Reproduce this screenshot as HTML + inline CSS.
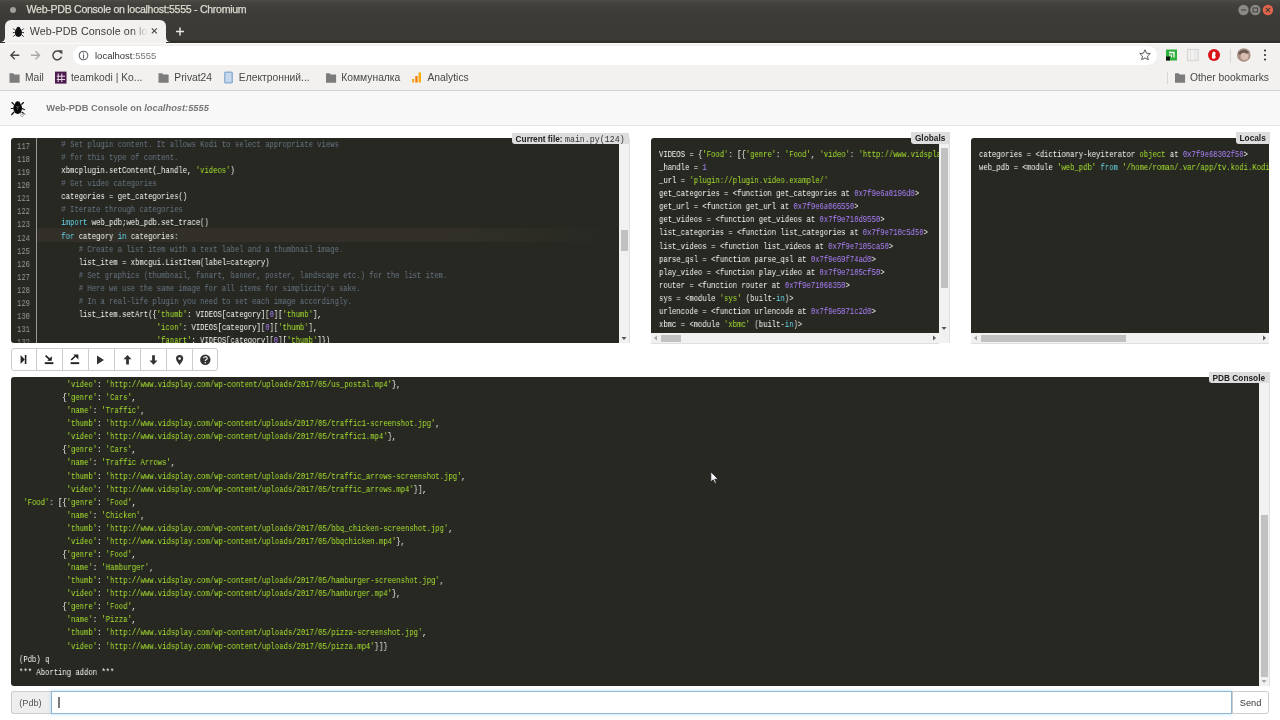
<!DOCTYPE html>
<html><head><meta charset="utf-8">
<style>
*{box-sizing:border-box;margin:0;padding:0}
html,body{width:1280px;height:720px;overflow:hidden;background:#fff;font-family:"Liberation Sans",sans-serif;position:relative}
.abs{position:absolute}
svg{position:absolute;overflow:visible}
#chrome{left:0;top:0;width:1280px;height:42.5px;background:linear-gradient(#4d4c47 0,#46453f 2px,#403f3b 7px,#3c3b37 16px,#3b3a36 40px,#2f2e2b 41.5px,#2f2e2b 42.5px)}
#wtitle{left:26.6px;top:2.6px;font-size:10.6px;letter-spacing:-0.3px;line-height:13px;color:#dfdbd2;white-space:nowrap;-webkit-text-stroke:0.25px #dfdbd2}
#tab{left:5px;top:20px;width:161px;height:23px;background:#f2f1f0;border-radius:6px 6px 0 0}
#tabtitle{left:29.8px;top:24.2px;width:118px;height:14px;overflow:hidden;font-size:10.7px;letter-spacing:0.1px;line-height:14px;color:#3c3c3c;white-space:nowrap;
  -webkit-mask-image:linear-gradient(to right,#000 86%,transparent 100%)}
#toolbar{left:0;top:42.5px;width:1280px;height:48px;background:#f2f1f0;border-bottom:1px solid #d3d2d0;box-shadow:inset 0 1px 0 #fbfbfa}
#omni{left:72.5px;top:45.6px;width:1084px;height:19.3px;background:#fff;border-radius:9.6px}
#url{left:95px;top:49px;font-size:9.5px;line-height:13px;color:#333;white-space:nowrap}
.bm{top:71px;font-size:10.3px;line-height:13px;color:#484848;white-space:nowrap}
#hdr{left:0;top:90.5px;width:1280px;height:35.5px;background:#f8f8f8;border-bottom:1px solid #e7e7e7}
#hdrtext{left:46.3px;top:102px;font-size:9.3px;font-weight:bold;color:#777;white-space:nowrap;line-height:12px}
.dark{background:#272822;color:#f8f8f2}
.mono{font-family:"Liberation Mono",monospace;font-size:8.68px;line-height:13.08px;white-space:pre;transform:scaleX(0.8333);transform-origin:0 0;will-change:transform}
.c{color:#687684}.s{color:#a6e22e}.k{color:#66d9ef}.n{color:#ae81ff}.o{color:#f8f8f2}.ln{color:#999}
.hl{background:linear-gradient(to right,rgba(153,122,102,.09) 70%,rgba(153,122,102,0))}
.lbl{background:#ddd;color:#222;font-weight:bold;font-size:8.3px;line-height:13px;overflow:hidden;border-radius:0 0 0 3px;white-space:nowrap;padding-left:4px}
.sb{background:#f1f1f1}
.sbv{box-shadow:inset -1px 0 0 #e0e0e0}.sbh{box-shadow:inset 0 -1px 0 #e0e0e0}
.thumb{background:#c1c1c1}
.btn{top:348.5px;width:26px;height:22.5px;border:1px solid #ccc;background:#fff}
#root{position:absolute;left:0;top:0;width:1280px;height:720px;will-change:transform}
</style></head><body><div id="root">
<!-- browser chrome -->
<div id="chrome" class="abs"></div>
<svg style="left:0;top:0" width="30" height="20"><circle cx="13" cy="10" r="3" fill="#a09f9a"/></svg>
<div id="wtitle" class="abs">Web-PDB Console on localhost:5555 - Chromium</div>
<svg style="left:1230px;top:0" width="50" height="20">
 <circle cx="13.5" cy="10" r="5.2" fill="#8a8985"/><rect x="11" y="9.5" width="5" height="1" fill="#3c3b37"/>
 <circle cx="25.3" cy="10" r="5.2" fill="#8a8985"/><rect x="23" y="8" width="4.6" height="4" fill="none" stroke="#3c3b37" stroke-width="0.9"/>
 <circle cx="37.9" cy="10" r="5.2" fill="#e5654a"/><path d="M35.8 7.9l4.2 4.2M40 7.9l-4.2 4.2" stroke="#3c3b37" stroke-width="1.1"/>
</svg>
<div id="tab" class="abs"></div>
<svg style="left:0;top:36px" width="172" height="8"><path d="M0 6 Q5 6 5 1 L5 6 Z" fill="#f2f1f0"/><path d="M171 6 Q166 6 166 1 L166 6 Z" fill="#f2f1f0"/></svg>
<svg style="left:12px;top:25px" width="14" height="14" viewBox="0 0 24 24">
 <ellipse cx="11" cy="13" rx="6" ry="7.5" fill="#111"/><circle cx="11" cy="6" r="3.2" fill="#111"/>
 <path d="M5 9L2 6M17 9L20 6M4.5 13H1.5M17.5 13H20.5M5 17L2 20M17 17L20 20" stroke="#111" stroke-width="1.6"/>
</svg>
<div id="tabtitle" class="abs">Web-PDB Console on localhost:5555</div>
<svg style="left:150px;top:26px" width="12" height="12"><path d="M1.8 2.3l5 5M6.8 2.3l-5 5" stroke="#444" stroke-width="1.1"/></svg>
<svg style="left:174px;top:25px" width="14" height="14"><path d="M6 2.4v8M2 6.4h8" stroke="#e8e6e3" stroke-width="1.5"/></svg>

<div id="toolbar" class="abs"></div>
<svg style="left:0;top:42px" width="70" height="26">
 <path d="M19.3 13.2H11.5M14.8 9.2l-4 4 4 4" fill="none" stroke="#4a4a4a" stroke-width="1.4"/>
 <path d="M31 13.2h7.8M35.5 9.2l4 4-4 4" fill="none" stroke="#a8a8a8" stroke-width="1.4"/>
 <path d="M61.2 11.2A4.4 4.4 0 1 0 61.5 14.8" fill="none" stroke="#4a4a4a" stroke-width="1.5"/>
 <path d="M58.2 8.3h4.2v4.2z" fill="#4a4a4a"/>
</svg>
<div id="omni" class="abs"></div>
<svg style="left:78px;top:50px" width="12" height="12"><circle cx="5.5" cy="5.5" r="4.3" fill="none" stroke="#5f6368" stroke-width="1.1"/><path d="M5.5 4.6v3.8M5.5 2.6v1" stroke="#5f6368" stroke-width="1.1"/></svg>
<div id="url" class="abs">localhost<span style="color:#777">:5555</span></div>
<svg style="left:1139px;top:49px" width="12" height="12"><path d="M6 0.8l1.55 3.4 3.7 0.4-2.75 2.5 0.8 3.65L6 8.9l-3.3 1.85 0.8-3.65L0.75 4.6l3.7-0.4z" fill="none" stroke="#5a5a5a" stroke-width="1"/></svg>
<svg style="left:1164px;top:48px" width="16" height="14">
 <rect x="2" y="1.5" width="11" height="11" fill="#2eb03c"/>
 <path d="M5 4.5h5v5" fill="none" stroke="#fff" stroke-width="1.3"/><path d="M5 7h2.5v2.5" fill="none" stroke="#fff" stroke-width="1.1"/>
 <rect x="2" y="8.5" width="4" height="4" fill="#111"/>
</svg>
<svg style="left:1186px;top:48px" width="14" height="14"><rect x="1.5" y="1.5" width="10.5" height="11" fill="none" stroke="#d6d6d6" stroke-width="1.2"/><path d="M4.5 1.5v11M9 1.5v11" stroke="#e0e0e0" stroke-width="1"/></svg>
<svg style="left:1207px;top:48px" width="14" height="14"><circle cx="7" cy="7" r="6" fill="#d7141a"/><path d="M5 10.5V6.5l0.8-2.8h2.2l0.6 1.5-0.4 2.4 0.6 1.7L7.8 10.8z" fill="#fff"/></svg>
<div class="abs" style="left:1229.5px;top:49px;width:1px;height:14px;background:#d9d7d4"></div>
<svg style="left:1236px;top:48px" width="16" height="16"><circle cx="7.8" cy="7" r="6.8" fill="#a88e84"/><circle cx="8.5" cy="8" r="4" fill="#d9bdb0"/><path d="M2 5 Q7 -1 13 4 L11 6 Q7 3 4 7z" fill="#6c5a50"/></svg>
<svg style="left:1262px;top:48px" width="6" height="14"><circle cx="3" cy="2.5" r="1.1" fill="#333"/><circle cx="3" cy="7" r="1.1" fill="#333"/><circle cx="3" cy="11.5" r="1.1" fill="#333"/></svg>

<!-- bookmarks -->
<svg style="left:0;top:70px" width="500" height="16">
 <path d="M9.5 3.2h3.6l1.2 1.3h5.3v8.2H9.5z" fill="#7c7c7c"/>
 <rect x="55" y="1.6" width="11.5" height="12" fill="#4b1b4e"/><path d="M58.2 3.5v8.5M61.8 3.5v8.5M56.8 6.2h8.2M56.8 9.5h8.2" stroke="#e9dce9" stroke-width="1"/>
 <path d="M158.5 3.2h3.6l1.2 1.3h5.3v8.2h-10.1z" fill="#7c7c7c"/>
 <rect x="224" y="1.5" width="9" height="12" rx="1.5" fill="#8fb2d6"/><rect x="225.5" y="3" width="6" height="9" fill="#c7d9ec"/>
 <path d="M326 3.2h3.6l1.2 1.3h5.3v8.2H326z" fill="#7c7c7c"/>
 <rect x="412" y="9" width="2.2" height="3.5" fill="#f5a623"/><rect x="415.3" y="6" width="2.3" height="6.5" fill="#f57c00"/><rect x="418.6" y="2.5" width="2.4" height="10" fill="#f9ab00"/>
</svg>
<div class="abs bm" style="left:25px">Mail</div>
<div class="abs bm" style="left:71px">teamkodi | Ko...</div>
<div class="abs bm" style="left:174.3px">Privat24</div>
<div class="abs bm" style="left:238.8px">Електронний...</div>
<div class="abs bm" style="left:341.3px">Коммуналка</div>
<div class="abs bm" style="left:427.5px">Analytics</div>
<div class="abs" style="left:1167px;top:72px;width:1px;height:12px;background:#d9d7d4"></div>
<svg style="left:1170px;top:70px" width="20" height="16"><path d="M5 3.2h3.6l1.2 1.3h5.3v8.2H5z" fill="#7c7c7c"/></svg>
<div class="abs bm" style="left:1190px">Other bookmarks</div>

<!-- page header -->
<div id="hdr" class="abs"></div>
<svg style="left:9px;top:99px" width="20" height="20" viewBox="0 0 20 20">
 <ellipse cx="8.7" cy="9.3" rx="4.4" ry="5.6" fill="#0a0a0a"/><ellipse cx="8.7" cy="4.3" rx="2.4" ry="2" fill="#0a0a0a"/>
 <path d="M5 5.5L2.6 3.2M12.4 5.5L14.8 3.2M4.5 9.5H1.8M13 9.5L15.8 10.8M5 13L2.4 16M12.6 13L15.5 15" stroke="#111" stroke-width="1.2"/>
 <path d="M7 7.6h3.4M8.7 7.6v3.4" stroke="#555" stroke-width="0.9"/>
 <path d="M11 14l2 2 2-2 2 2M11 16l2 2 2-2" stroke="#888" stroke-width="0.6" fill="none"/>
</svg>
<div id="hdrtext" class="abs">Web-PDB Console on <i>localhost:5555</i></div>

<!-- editor -->
<div class="abs dark" style="left:11px;top:138px;width:608px;height:205px;overflow:hidden;border-radius:3px 0 0 3px">
  <div class="abs hl" style="left:26px;top:90.2px;width:582px;height:13.8px"></div>
  <div class="abs" style="left:25px;top:0;width:1px;height:205px;background:#999"></div>
  <div class="abs mono ln" style="left:0;top:3.3px;width:22.8px;text-align:right">117
118
119
120
121
122
123
124
125
126
127
128
129
130
131
132</div>
  <div class="abs mono" style="left:32.5px;top:1.4px">    <span class="c"># Set plugin content. It allows Kodi to select appropriate views</span>
    <span class="c"># for this type of content.</span>
    xbmcplugin.setContent(_handle, <span class="s">'videos'</span>)
    <span class="c"># Get video categories</span>
    categories <span class="o">=</span> get_categories()
    <span class="c"># Iterate through categories</span>
    <span class="k">import</span> web_pdb;web_pdb.set_trace()
    <span class="k">for</span> category <span class="k">in</span> categories:
        <span class="c"># Create a list item with a text label and a thumbnail image.</span>
        list_item <span class="o">=</span> xbmcgui.ListItem(label<span class="o">=</span>category)
        <span class="c"># Set graphics (thumbnail, fanart, banner, poster, landscape etc.) for the list item.</span>
        <span class="c"># Here we use the same image for all items for simplicity's sake.</span>
        <span class="c"># In a real-life plugin you need to set each image accordingly.</span>
        list_item.setArt({<span class="s">'thumb'</span>: VIDEOS[category][<span class="n">0</span>][<span class="s">'thumb'</span>],
                          <span class="s">'icon'</span>: VIDEOS[category][<span class="n">0</span>][<span class="s">'thumb'</span>],
                          <span class="s">'fanart'</span>: VIDEOS[category][<span class="n">0</span>][<span class="s">'thumb'</span>]})</div>
</div>
<div class="abs sb sbv" style="left:619px;top:138px;width:10.5px;height:205px"></div>
<div class="abs thumb" style="left:620.5px;top:230px;width:7px;height:21px"></div>
<svg style="left:619px;top:333px" width="10" height="10"><path d="M2.5 4h5L5 7z" fill="#555"/></svg>
<div class="abs lbl" style="left:511.6px;top:132.6px;width:117.8px;height:11.6px">Current file: <span style="font-family:'Liberation Mono',monospace;font-weight:normal;font-size:8.3px;color:#333">main.py(124)</span></div>

<!-- globals -->
<div class="abs dark" style="left:651px;top:138px;width:288px;height:195px;overflow:hidden;border-radius:3px 0 0 0">
  <div class="abs mono" style="left:7.6px;top:10.6px">VIDEOS <span class="o">=</span> {<span class="s">'Food'</span>: [{<span class="s">'genre'</span>: <span class="s">'Food'</span>, <span class="s">'video'</span>: <span class="s">'http://www.vidsplay.com/wp-content/uploads/2017/05/bbqchicken.mp4'</span>}]}
_handle <span class="o">=</span> <span class="n">1</span>
_url <span class="o">=</span> <span class="s">'plugin://plugin.video.example/'</span>
get_categories <span class="o">=</span> &lt;function get_categories at <span class="n">0x7f9e6a0196d0</span>&gt;
get_url <span class="o">=</span> &lt;function get_url at <span class="n">0x7f9e6a066550</span>&gt;
get_videos <span class="o">=</span> &lt;function get_videos at <span class="n">0x7f9e710d9550</span>&gt;
list_categories <span class="o">=</span> &lt;function list_categories at <span class="n">0x7f9e710c5d50</span>&gt;
list_videos <span class="o">=</span> &lt;function list_videos at <span class="n">0x7f9e7105ca50</span>&gt;
parse_qsl <span class="o">=</span> &lt;function parse_qsl at <span class="n">0x7f9e69f74ad0</span>&gt;
play_video <span class="o">=</span> &lt;function play_video at <span class="n">0x7f9e7105cf50</span>&gt;
router <span class="o">=</span> &lt;function router at <span class="n">0x7f9e71068350</span>&gt;
sys <span class="o">=</span> &lt;module <span class="s">'sys'</span> (built<span class="o">-</span><span class="k">in</span>)&gt;
urlencode <span class="o">=</span> &lt;function urlencode at <span class="n">0x7f9e5871c2d0</span>&gt;
xbmc <span class="o">=</span> &lt;module <span class="s">'xbmc'</span> (built<span class="o">-</span><span class="k">in</span>)&gt;</div>
</div>
<div class="abs sb sbv" style="left:939px;top:138px;width:10.5px;height:205px"></div>
<div class="abs thumb" style="left:940.5px;top:148px;width:7px;height:140px"></div>
<svg style="left:939px;top:323px" width="10" height="10"><path d="M2.5 4h5L5 7z" fill="#555"/></svg>
<div class="abs sb sbh" style="left:651px;top:333px;width:288px;height:10.5px"></div>
<div class="abs thumb" style="left:661px;top:334.5px;width:20px;height:7px"></div>
<svg style="left:651px;top:333px" width="288" height="10"><path d="M6 2.5v5L3 5z" fill="#a3a3a3"/><path d="M282 2.5v5L285 5z" fill="#555"/></svg>
<div class="abs lbl" style="left:910.9px;top:132.3px;width:38.7px;height:11.6px">Globals</div>

<!-- locals -->
<div class="abs dark" style="left:971px;top:138px;width:298px;height:195px;overflow:hidden;border-radius:3px 3px 0 0">
  <div class="abs mono" style="left:7.6px;top:10.6px">categories <span class="o">=</span> &lt;dictionary<span class="o">-</span>keyiterator <span class="s">object</span> at <span class="n">0x7f9e68302f50</span>&gt;
web_pdb <span class="o">=</span> &lt;module <span class="s">'web_pdb'</span> <span class="k">from</span> <span class="s">'/home/roman/.var/app/tv.kodi.Kodi/data/addons/plugin.video.example/web_pdb/__init__.pyc'</span>&gt;</div>
</div>
<div class="abs sb sbh" style="left:971px;top:333px;width:298px;height:10.5px"></div>
<div class="abs thumb" style="left:981px;top:334.5px;width:145px;height:7px"></div>
<svg style="left:971px;top:333px" width="298" height="10"><path d="M6 2.5v5L3 5z" fill="#a3a3a3"/><path d="M292 2.5v5L295 5z" fill="#555"/></svg>
<div class="abs lbl" style="left:1235.5px;top:132.3px;width:34.2px;height:11.6px">Locals</div>

<!-- buttons -->
<div class="abs" style="left:10.6px;top:348px;width:207.4px;height:23.4px;border:1px solid #ccc;border-radius:3px;background:#fff"></div>
<div class="abs" style="left:36px;top:348.5px;width:1px;height:22.4px;background:#ccc"></div>
<div class="abs" style="left:62px;top:348.5px;width:1px;height:22.4px;background:#ccc"></div>
<div class="abs" style="left:88px;top:348.5px;width:1px;height:22.4px;background:#ccc"></div>
<div class="abs" style="left:114px;top:348.5px;width:1px;height:22.4px;background:#ccc"></div>
<div class="abs" style="left:140px;top:348.5px;width:1px;height:22.4px;background:#ccc"></div>
<div class="abs" style="left:166px;top:348.5px;width:1px;height:22.4px;background:#ccc"></div>
<div class="abs" style="left:192px;top:348.5px;width:1px;height:22.4px;background:#ccc"></div>
<svg style="left:0;top:348px" width="220" height="24">
 <!-- step over -->
 <path d="M20.6 7v9l4.2-4.5z" fill="#222"/><rect x="24.8" y="7" width="1.6" height="9" fill="#222"/>
 <!-- step into -->
 <path d="M45.6 7.6l4.6 4.2" stroke="#222" stroke-width="1.7" fill="none"/><path d="M47.2 12.8h4.6v-4.6z" fill="#222"/><rect x="44.8" y="14.2" width="8.6" height="1.9" fill="#222"/>
 <!-- step out -->
 <path d="M71.2 12l4.2-4" stroke="#222" stroke-width="1.7" fill="none"/><path d="M73.4 6.6h5v5z" fill="#222"/><rect x="70.6" y="14.2" width="8.6" height="1.9" fill="#222"/>
 <!-- continue -->
 <path d="M97 7.5v9l7-4.5z" fill="#333"/>
 <!-- up -->
 <path d="M127.5 7l-4 4.2h2.6v5.3h2.8v-5.3h2.6z" fill="#333"/>
 <!-- down -->
 <path d="M153.5 16.8l-4-4.2h2.6V7.3h2.8v5.3h2.6z" fill="#333"/>
 <!-- marker -->
 <path d="M179.6 17.2c-1.2-1.8-3.6-4.4-3.6-6.6a3.6 3.6 0 0 1 7.2 0c0 2.2-2.4 4.8-3.6 6.6z" fill="#333"/><circle cx="179.6" cy="10.6" r="1.3" fill="#fff"/>
 <!-- help -->
 <circle cx="205.3" cy="11.8" r="5.2" fill="#333"/><path d="M203.6 10.3a1.8 1.6 0 1 1 2.5 1.5c-0.6 0.3-0.8 0.6-0.8 1.2" stroke="#fff" stroke-width="1.2" fill="none"/><circle cx="205.3" cy="14.7" r="0.7" fill="#fff"/>
</svg>

<!-- console -->
<div class="abs dark" style="left:11px;top:377px;width:1248px;height:308.8px;overflow:hidden;border-radius:3px 0 0 3px">
  <div class="abs mono" style="left:8.3px;top:1.9px">           <span class="s">'video'</span>: <span class="s">'http://www.vidsplay.com/wp-content/uploads/2017/05/us_postal.mp4'</span>},
          {<span class="s">'genre'</span>: <span class="s">'Cars'</span>,
           <span class="s">'name'</span>: <span class="s">'Traffic'</span>,
           <span class="s">'thumb'</span>: <span class="s">'http://www.vidsplay.com/wp-content/uploads/2017/05/traffic1-screenshot.jpg'</span>,
           <span class="s">'video'</span>: <span class="s">'http://www.vidsplay.com/wp-content/uploads/2017/05/traffic1.mp4'</span>},
          {<span class="s">'genre'</span>: <span class="s">'Cars'</span>,
           <span class="s">'name'</span>: <span class="s">'Traffic Arrows'</span>,
           <span class="s">'thumb'</span>: <span class="s">'http://www.vidsplay.com/wp-content/uploads/2017/05/traffic_arrows-screenshot.jpg'</span>,
           <span class="s">'video'</span>: <span class="s">'http://www.vidsplay.com/wp-content/uploads/2017/05/traffic_arrows.mp4'</span>}],
 <span class="s">'Food'</span>: [{<span class="s">'genre'</span>: <span class="s">'Food'</span>,
           <span class="s">'name'</span>: <span class="s">'Chicken'</span>,
           <span class="s">'thumb'</span>: <span class="s">'http://www.vidsplay.com/wp-content/uploads/2017/05/bbq_chicken-screenshot.jpg'</span>,
           <span class="s">'video'</span>: <span class="s">'http://www.vidsplay.com/wp-content/uploads/2017/05/bbqchicken.mp4'</span>},
          {<span class="s">'genre'</span>: <span class="s">'Food'</span>,
           <span class="s">'name'</span>: <span class="s">'Hamburger'</span>,
           <span class="s">'thumb'</span>: <span class="s">'http://www.vidsplay.com/wp-content/uploads/2017/05/hamburger-screenshot.jpg'</span>,
           <span class="s">'video'</span>: <span class="s">'http://www.vidsplay.com/wp-content/uploads/2017/05/hamburger.mp4'</span>},
          {<span class="s">'genre'</span>: <span class="s">'Food'</span>,
           <span class="s">'name'</span>: <span class="s">'Pizza'</span>,
           <span class="s">'thumb'</span>: <span class="s">'http://www.vidsplay.com/wp-content/uploads/2017/05/pizza-screenshot.jpg'</span>,
           <span class="s">'video'</span>: <span class="s">'http://www.vidsplay.com/wp-content/uploads/2017/05/pizza.mp4'</span>}]}
(Pdb) q
*** Aborting addon ***</div>
</div>
<div class="abs sb sbv" style="left:1259px;top:377px;width:10.5px;height:309px"></div>
<div class="abs thumb" style="left:1260.5px;top:515px;width:7px;height:162px"></div>
<svg style="left:1259px;top:676px" width="10" height="10"><path d="M2.5 4h5L5 7z" fill="#a3a3a3"/></svg>
<div class="abs lbl" style="left:1208.5px;top:371.7px;width:61px;height:11.5px">PDB Console</div>

<!-- input group -->
<div class="abs" style="left:11px;top:691.2px;width:40px;height:23px;background:#eee;border:1px solid #ccc;border-right:0;border-radius:3px 0 0 3px"></div>
<div class="abs" style="left:19.2px;top:697px;font-size:9.2px;line-height:12px;color:#555">(Pdb)</div>
<div class="abs" style="left:50.6px;top:691.2px;width:1181px;height:23px;background:#fff;border:1px solid #8fb6d4;box-shadow:0 0 3px 1px rgba(160,210,240,.45)"></div>
<div class="abs" style="left:58.4px;top:696.6px;width:1.4px;height:11.7px;background:#7a7a7a"></div>
<div class="abs" style="left:1231.6px;top:691.2px;width:37.8px;height:23px;background:#fff;border:1px solid #ccc;border-radius:0 3px 3px 0"></div>
<div class="abs" style="left:1239.8px;top:697px;font-size:9.2px;line-height:12px;color:#333">Send</div>

<!-- mouse cursor -->
<svg style="left:710px;top:471px" width="10" height="14"><path d="M0.8 0.8v10.2l2.4-2.2 1.7 3.6 1.5-0.7-1.6-3.5h3.4z" fill="#f4f4f4" stroke="#111" stroke-width="0.7"/></svg>
</div></body></html>
